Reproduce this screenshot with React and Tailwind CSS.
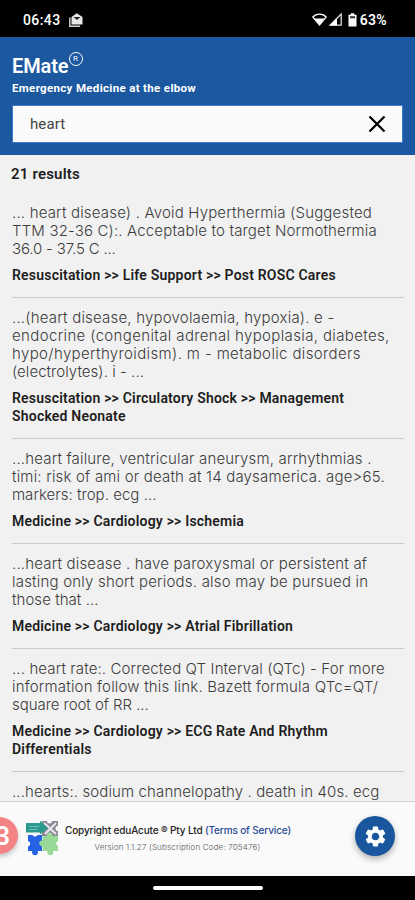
import React from 'react';
import clsx from 'clsx';

// Each result keeps its own line breaks, with tracking tuned per line
const RESULTS = [
  {
    lines: [
      ['... heart disease) . Avoid Hyperthermia (Suggested', 'tracking-[0.18px]'],
      ['TTM 32-36 C):. Acceptable to target Normothermia', 'tracking-[0.15px]'],
      ['36.0 - 37.5 C ...', 'tracking-[-0.17px]'],
    ],
    path: ['Resuscitation >> Life Support >> Post ROSC Cares'],
  },
  {
    lines: [
      ['...(heart disease, hypovolaemia, hypoxia). e -', 'tracking-[0.2px]'],
      ['endocrine (congenital adrenal hypoplasia, diabetes,', 'tracking-[0.36px]'],
      ['hypo/hyperthyroidism). m - metabolic disorders', 'tracking-[0.37px]'],
      ['(electrolytes). i - ...', 'tracking-[0.05px]'],
    ],
    path: ['Resuscitation >> Circulatory Shock >> Management', 'Shocked Neonate'],
  },
  {
    lines: [
      ['...heart failure, ventricular aneurysm, arrhythmias .', 'tracking-[0.17px]'],
      ['timi: risk of ami or death at 14 daysamerica. age>65.', 'tracking-[0.19px]'],
      ['markers: trop. ecg ...', 'tracking-[0.03px]'],
    ],
    path: ['Medicine >> Cardiology >> Ischemia'],
  },
  {
    lines: [
      ['...heart disease . have paroxysmal or persistent af', 'tracking-[0.18px]'],
      ['lasting only short periods. also may be pursued in', 'tracking-[0.2px]'],
      ['those that ...', 'tracking-[0.05px]'],
    ],
    path: ['Medicine >> Cardiology >> Atrial Fibrillation'],
  },
  {
    lines: [
      ['... heart rate:. Corrected QT Interval (QTc) - For more', 'tracking-[0.12px]'],
      ['information follow this link. Bazett formula QTc=QT/', 'tracking-[0.19px]'],
      ['square root of RR ...', 'tracking-[-0.05px]'],
    ],
    path: ['Medicine >> Cardiology >> ECG Rate And Rhythm', 'Differentials'],
  },
  {
    lines: [['...hearts:. sodium channelopathy . death in 40s. ecg', 'tracking-[0.12px]']],
    path: [],
  },
];

function StatusBar() {
  return (
    <div className="h-[37px] shrink-0 bg-black text-white flex items-center justify-between pl-[23px] pr-7 pt-0.5">
      <div className="flex items-center gap-2">
        <span className="text-[14px] leading-none font-medium tracking-[0.4px]">06:43</span>
        <svg width="14" height="14" viewBox="0 0 14 14">
          <path d="M0.8 4.5V13.2H11" fill="none" stroke="#d4d4d4" strokeWidth="1.4" />
          <path d="M2.5 4L7.8 0.2L13.5 4V11.5H2.5Z" fill="#e8e8e8" />
          <path d="M4.5 4H11.5L8 7Z" fill="#222" />
        </svg>
      </div>
      <div className="flex items-center">
        <svg width="15" height="13" viewBox="0 0 15 13">
          <path d="M0.8 4C4.4 0.2 10.6 0.2 14.2 4L7.5 12Z" fill="none" stroke="#fff" strokeWidth="1.3" />
          <path d="M2.6 5.6H12.4L7.5 12Z" fill="#fff" />
        </svg>
        <svg className="ml-0.5" width="13" height="13" viewBox="0 0 13 13">
          <path d="M12.2 1V12.2H1Z" fill="none" stroke="#ddd" strokeWidth="1.3" />
          <path d="M8 5V12.4H0.8Z" fill="#fff" />
        </svg>
        <svg className="ml-1.5" width="9" height="14" viewBox="0 0 9 14">
          <path d="M2.7 0.3H6.3V1.7H8.5V13.5H0.5V1.7H2.7Z" fill="#fff" />
          <path d="M2 3.2H7V5.3H2Z" fill="#333" />
        </svg>
        <span className="ml-[3px] text-[14px] leading-none font-semibold tracking-[0.3px]">63%</span>
      </div>
    </div>
  );
}

function Header() {
  return (
    <header className="h-[118px] shrink-0 bg-[#1c589f] px-3 pt-[15px] text-white">
      <div className="flex items-start h-7">
        <h1 className="text-[20px] leading-7 font-semibold tracking-[-0.1px]">EMate</h1>
        <span className="size-[14px] rounded-full border border-white flex items-center justify-center text-[8px] leading-none">
          R
        </span>
      </div>
      <p className="text-[11.5px] leading-4 font-bold tracking-[0.33px]">Emergency Medicine at the elbow</p>
      <div className="mt-[9px] h-[38px] bg-[#fafafa] border border-[#3d78cc] flex items-center justify-between pl-[17px] pr-4">
        <span className="pt-px text-[15px] text-[#444] tracking-[0.1px]">heart</span>
        <svg width="18" height="18" viewBox="0 0 18 18" fill="none" stroke="#000" strokeWidth="2.3">
          <path d="M1.5 1.5L16.5 16.5M16.5 1.5L1.5 16.5" />
        </svg>
      </div>
    </header>
  );
}

function Result({ lines, path }) {
  return (
    <div className="pt-[11px] pb-[13px] border-b border-[#cbcbcb]">
      <div className="font-['Inter'] font-light text-[15px] leading-[18px] text-[#3c3c3c]">
        {lines.map(([text, tracking]) => (
          <div key={text} className="whitespace-nowrap">
            <span className={clsx(tracking)}>{text}</span>
          </div>
        ))}
      </div>
      <div className="mt-2 text-[14px] leading-[18px] font-semibold text-[#1d1d1d] tracking-[0.2px]">
        {path.map((line) => (
          <div key={line} className="whitespace-nowrap">{line}</div>
        ))}
      </div>
    </div>
  );
}

function PuzzleLogo() {
  return (
    <svg width="34" height="37" viewBox="0 0 34 37">
      {/* grey piece */}
      <path d="M17 1H22A2.5 2.5 0 0 0 27 1H33V6A2.4 2.4 0 0 0 33 11V16H27A2.5 2.5 0 0 0 22 16H17Z" fill="#8d8998" />
      <path d="M19 3L31 14M31 3L20 14" stroke="#e9e7ee" strokeWidth="2" />
      {/* blue piece, notched on top and left */}
      <path d="M3 15H7.5A2.8 2.8 0 0 0 12.5 15H17V20.5A2.8 2.8 0 1 1 17 26V31H12.7A3 3 0 1 1 7.3 31H3V26.5A2.8 2.8 0 0 0 3 21Z" fill="#2461e4" />
      {/* green piece, tabs on top, left and bottom */}
      <path d="M17.5 16H22A2.8 2.8 0 1 1 27.4 16H33V21A2.6 2.6 0 0 0 33 26V31H28A3 3 0 1 1 22.6 31H17.5V26A2.8 2.8 0 1 1 17.5 20.5Z" fill="#98d997" />
      {/* teal arrow */}
      <path d="M1 3H15V0.8L23 8L15 14.5V12.5H1Z" fill="#2b9a8e" />
      <path d="M4 6.5H14M4 9.5H12" stroke="#6fbdb4" strokeWidth="1" />
    </svg>
  );
}

function Footer() {
  return (
    <footer className="relative h-[75px] shrink-0 bg-[#fafafa] border-t border-[#d2d2d2] overflow-hidden">
      <div className="flex h-full items-start">
        <div className="-ml-[19px] mt-[15px] size-[37px] shrink-0 rounded-full bg-[#f48385] shadow-[0_3px_5px_rgba(0,0,0,0.2)] flex items-center justify-end pr-[8px] text-white text-[26px] leading-none font-semibold">
          3
        </div>
        <div className="ml-[7px] mt-[18px] shrink-0">
          <PuzzleLogo />
        </div>
        <div className="ml-[6px] mt-[20px] w-[225px] shrink-0 text-center whitespace-nowrap">
          <p className="font-['Inter'] text-[10px] leading-4 font-medium tracking-[-0.14px] text-[#222]">
            Copyright eduAcute ® Pty Ltd <span className="text-[#284b96]">(Terms of Service)</span>
          </p>
          <p className="mt-px font-['Inter'] text-[8px] leading-4 font-light tracking-[0.16px] text-[#555]">
            Version 1.1.27 (Subscription Code: 705476)
          </p>
        </div>
        <button className="ml-auto mr-5 mt-[14px] size-10 rounded-full bg-[#1a569e] shadow-[0_3px_6px_rgba(0,0,0,0.3)] flex items-center justify-center">
          <svg width="25" height="25" viewBox="0 0 24 24" fill="#fff">
            <path d="M19.14 12.94c.04-.3.06-.61.06-.94 0-.32-.02-.64-.07-.94l2.03-1.58a.49.49 0 0 0 .12-.61l-1.92-3.32a.488.488 0 0 0-.59-.22l-2.39.96c-.5-.38-1.03-.7-1.62-.94l-.36-2.54a.484.484 0 0 0-.48-.41h-3.84c-.24 0-.43.17-.47.41l-.36 2.54c-.59.24-1.13.57-1.62.94l-2.39-.96c-.22-.08-.47 0-.59.22L2.74 8.87c-.12.21-.08.47.12.61l2.03 1.58c-.05.3-.09.63-.09.94s.02.64.07.94l-2.03 1.58a.49.49 0 0 0-.12.61l1.92 3.32c.12.22.37.29.59.22l2.39-.96c.5.38 1.03.7 1.62.94l.36 2.54c.05.24.24.41.48.41h3.84c.24 0 .44-.17.47-.41l.36-2.54c.59-.24 1.13-.56 1.62-.94l2.39.96c.22.08.47 0 .59-.22l1.92-3.32c.12-.22.07-.47-.12-.61l-2.01-1.58zM12 15.6A3.61 3.61 0 0 1 8.4 12c0-1.98 1.62-3.6 3.6-3.6s3.6 1.62 3.6 3.6-1.62 3.6-3.6 3.6z" />
          </svg>
        </button>
      </div>
    </footer>
  );
}

export default function App() {
  return (
    <div className="h-[900px] w-[415px] flex flex-col overflow-hidden bg-[#f1f1f1] font-['Roboto',sans-serif]">
      <StatusBar />
      <Header />
      <main className="flex-1 min-h-0 overflow-hidden pl-3 pr-[11px] pt-[9px]">
        <h2 className="-ml-px h-[29px] text-[15px] leading-5 font-semibold text-[#1d1d1d] tracking-[0.2px]">21 results</h2>
        {RESULTS.map((result) => (
          <Result key={result.lines[0][0]} {...result} />
        ))}
      </main>
      <Footer />
      <div className="h-6 shrink-0 bg-black flex items-center justify-center">
        <div className="h-1 w-[110px] rounded-sm bg-white" />
      </div>
    </div>
  );
}
